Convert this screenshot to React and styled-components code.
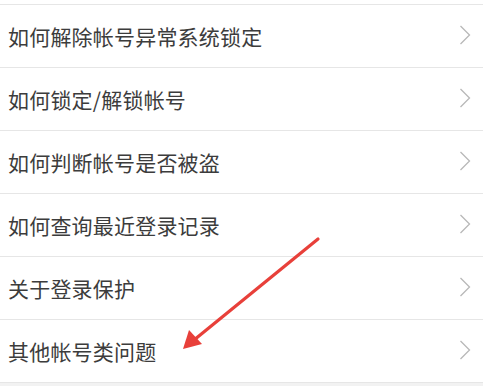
import styled, { createGlobalStyle } from 'styled-components';

const GlobalStyle = createGlobalStyle`
  html, body {
    margin : 0;
    padding : 0;
    background : #ffffff;
  }
  body {
    font-family : "Noto Sans CJK SC", "Liberation Sans", sans-serif;
  }
`

const Page = styled.div`
  position : relative;
  width : 483px;
  height : 386px;
  overflow : hidden;
  background : #f2f2f2;
`

const List = styled.ul`
  list-style : none;
  margin : 0;
  padding : 0;
  padding-top : 4px;
  background : #ffffff;
  border-bottom : 1px solid #e6e6e6;
`

const Row = styled.li`
  display : flex;
  align-items : center;
  justify-content : space-between;
  height : 62px;
  padding : 0 12px 0 8px;
  border-top : 1px solid #e6e6e6;
`

const Label = styled.span`
  font-size : 21px;
  color : #3c3c3c;
  letter-spacing : 0.2px;
  margin-top : -1px;
`

const ChevronIcon = styled.svg`
  margin-top : -3px;
`

const Chevron = () => (
  <ChevronIcon width="12" height="20" viewBox="0 0 12 20">
    <path d="M1.5 1 L10.5 10 L1.5 19" fill="none" stroke="#b8b8b8" strokeWidth="1.3" />
  </ChevronIcon>
)

const Arrow = styled.svg`
  position : absolute;
  left : 0;
  top : 0;
  pointer-events : none;
`

const items = [
  '如何解除帐号异常系统锁定',
  '如何锁定/解锁帐号',
  '如何判断帐号是否被盗',
  '如何查询最近登录记录',
  '关于登录保护',
  '其他帐号类问题',
]

function App() {
  return (
    <Page>
      <GlobalStyle />
      <List>
        {items.map(t => (
          <Row key={t}>
            <Label>{t}</Label>
            <Chevron />
          </Row>
        ))}
      </List>
      <Arrow width="483" height="386" viewBox="0 0 483 386">
        <line x1="318" y1="239" x2="194" y2="340" stroke="#e8403a" strokeWidth="3.2" strokeLinecap="round" />
        <polygon points="183,349 189,330 202,344" fill="#e8403a" />
      </Arrow>
    </Page>
  )
}

export default App
